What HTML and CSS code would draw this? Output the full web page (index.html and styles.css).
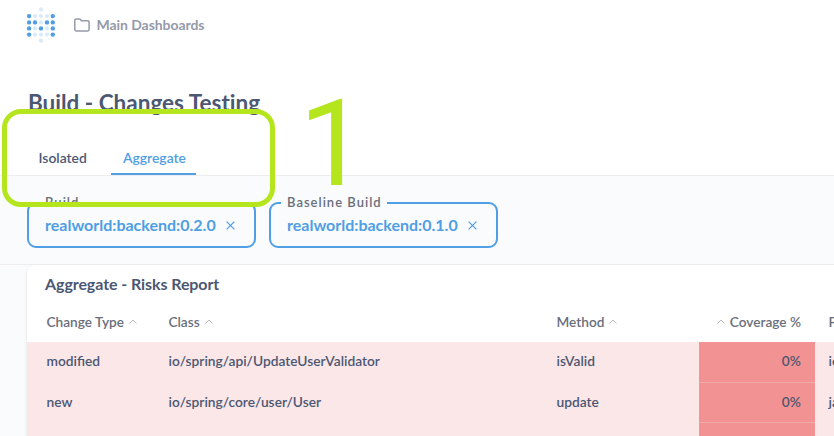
FILE: index.html
```html
<!DOCTYPE html>
<html lang="en">
<head>
<meta charset="utf-8">
<title>Build - Changes Testing</title>
<link rel="stylesheet" href="styles.css">
</head>
<body>
<header class="topbar">
  <svg class="logo" width="30" height="36" viewBox="0 0 30 36">
    <g fill="#dbeaf9"><circle cx="15" cy="2.4" r="2.1"/><circle cx="9" cy="9.1" r="2.1"/><circle cx="15" cy="9.1" r="2.1"/><circle cx="21" cy="9.1" r="2.1"/><circle cx="15" cy="15.4" r="2.1"/><circle cx="9" cy="21.4" r="2.1"/><circle cx="21" cy="21.4" r="2.1"/><circle cx="9" cy="27.6" r="2.1"/><circle cx="15" cy="27.6" r="2.1"/><circle cx="21" cy="27.6" r="2.1"/><circle cx="15" cy="33.7" r="2.1"/></g>
    <g fill="#509ee3"><circle cx="3.1" cy="9.1" r="2.2"/><circle cx="26.8" cy="9.1" r="2.2"/><circle cx="3.1" cy="15.4" r="2.2"/><circle cx="9" cy="15.4" r="2.2"/><circle cx="21" cy="15.4" r="2.2"/><circle cx="26.8" cy="15.4" r="2.2"/><circle cx="3.1" cy="21.4" r="2.2"/><circle cx="15" cy="21.4" r="2.2"/><circle cx="26.8" cy="21.4" r="2.2"/><circle cx="3.1" cy="27.6" r="2.2"/><circle cx="26.8" cy="27.6" r="2.2"/></g>
  </svg>
  <svg class="folder" width="16" height="14" viewBox="0 0 16 14" fill="none" stroke="#949aab" stroke-width="1.5" stroke-linejoin="round"><path d="M.8 2.2Q.8 .9 2.1 .9H5.4Q6.1 .9 6.5 1.5L7.4 2.8H13.8Q15.1 2.8 15.1 4.1V11.6Q15.1 12.9 13.8 12.9H2.1Q.8 12.9 .8 11.6Z"/></svg>
  <span>Main Dashboards</span>
</header>
<h1 class="title">Build - Changes Testing</h1>
<nav class="tabs"><a class="tab">Isolated</a><a class="tab active">Aggregate</a></nav>
<section class="filters">
  <fieldset class="filter"><legend>Build</legend><span>realworld:backend:0.2.0</span><svg width="9" height="9" viewBox="0 0 9 9"><path d="M.6 .6l7.8 7.8M8.4 .6L.6 8.4"/></svg></fieldset>
  <fieldset class="filter"><legend>Baseline Build</legend><span>realworld:backend:0.1.0</span><svg width="9" height="9" viewBox="0 0 9 9"><path d="M.6 .6l7.8 7.8M8.4 .6L.6 8.4"/></svg></fieldset>
</section>
<main class="content">
  <section class="card">
    <h2>Aggregate - Risks Report</h2>
    <div class="row head"><div>Change Type<svg class="sort" viewBox="0 0 8 5"><path d="M.5 4.5L4 1l3.5 3.5"/></svg></div><div>Class<svg class="sort" viewBox="0 0 8 5"><path d="M.5 4.5L4 1l3.5 3.5"/></svg></div><div>Method<svg class="sort" viewBox="0 0 8 5"><path d="M.5 4.5L4 1l3.5 3.5"/></svg></div><div class="coverage"><svg class="sort" viewBox="0 0 8 5"><path d="M.5 4.5L4 1l3.5 3.5"/></svg>Coverage %</div><div>Path</div></div>
    <div class="row data"><div>modified</div><div>io/spring/api/UpdateUserValidator</div><div>isValid</div><div class="coverage">0%</div><div>io</div></div>
    <div class="row data"><div>new</div><div>io/spring/core/user/User</div><div>update</div><div class="coverage">0%</div><div>java</div></div>
    <div class="row data"><div></div><div></div><div></div><div class="coverage"></div><div></div></div>
  </section>
</main>
<div class="callout"></div>
<div class="callout-number">1</div>
</body>
</html>
```
FILE: styles.css
```css
* { box-sizing: border-box; }
body { margin: 0; height: 436px; overflow: hidden; position: relative; background: #fff; color: #4c5773; font-family: Lato, sans-serif; font-weight: 600; }
.topbar { height: 50px; padding-left: 26px; display: flex; align-items: center; font-size: 14px; color: #949aab; font-weight: 700; letter-spacing: -.06px; }
.topbar span { margin-top: -2px; }
.folder { margin: 0 6.5px 0 18px; }
.title { margin: 38px 0 0 28px; height: 30px; font-size: 22.5px; line-height: 30px; font-weight: 700; white-space: nowrap; font-variant-ligatures: none; }
.tabs { height: 58px; padding-left: 27px; display: flex; align-items: flex-end; border-bottom: 1px solid #eeecec; }
.tab { width: 72px; height: 34px; padding: 8px 0 0 11.5px; font-size: 13.9px; line-height: 17px; border-bottom: 2px solid transparent; margin-right: 12px; }
.tab.active { width: 85px; padding: 8px 0 0 12px; color: #509ee3; border-color: #509ee3; }
.filters { height: 89px; padding: 18px 27px 0; display: flex; gap: 13px; background: #f9fbfc; border-bottom: 1px solid #eeecec; }
.filter { width: 229px; height: 54px; margin: 0; padding: 0 0 6px 16px; display: flex; align-items: center; border: 2px solid #509ee3; border-radius: 9px; color: #509ee3; font-size: 16px; line-height: 20px; font-weight: 700; }
.filter legend { margin-left: -6px; padding: 0 5px 0 6px; height: 17px; line-height: 17px; font-size: 13px; letter-spacing: 1px; color: #696e7b; font-weight: 600; }
.filter span { margin-top: -1px; }
.filter svg { margin: -1px 0 0 10.5px; fill: none; stroke: #509ee3; stroke-width: 1.2; }
.content { height: 171px; padding-left: 27px; background: #f9fbfc; overflow: hidden; }
.card { width: 840px; height: 180px; background: #fff; border-radius: 8px 0 0; box-shadow: 0 1px 3px #0002; }
.card h2 { margin: 0; height: 37px; padding: 9px 0 0 18px; font-size: 16px; line-height: 20px; font-weight: 700; letter-spacing: -.08px; }
.row { display: grid; grid-template-columns: 122px 388px 162px 116px 52px; font-size: 13.78px; line-height: 18px; }
.row > div { padding: 0 14px 0 19.5px; display: flex; align-items: center; white-space: nowrap; }
.row > div:first-child { padding-right: 0; }
.row > div:last-child { padding-left: 13.5px; }
.row > .coverage { justify-content: flex-end; }
.head { height: 40px; color: #696e7b; font-size: 13.65px; }
.sort { flex: none; width: 8px; height: 5px; margin: 0 0 1px 5px; fill: none; stroke: #b8bbc3; stroke-width: 1; }
.coverage .sort { margin: 0 5px 1px 0; }
.data { height: 40.5px; background: #fbe7e7; }
.data > div { border-bottom: 1px solid #f7e7e8; padding-bottom: 1px; }
.data > .coverage { background: #f29292; border-bottom-color: #f1abab; }
.callout { position: absolute; left: 2px; top: 109px; width: 273px; height: 98px; border: 5px solid #b5e61d; border-radius: 19px; }
.callout-number { position: absolute; left: 299px; top: 84px; font: 400 121px/120px Roboto, sans-serif; color: #b5e61d; }
```
